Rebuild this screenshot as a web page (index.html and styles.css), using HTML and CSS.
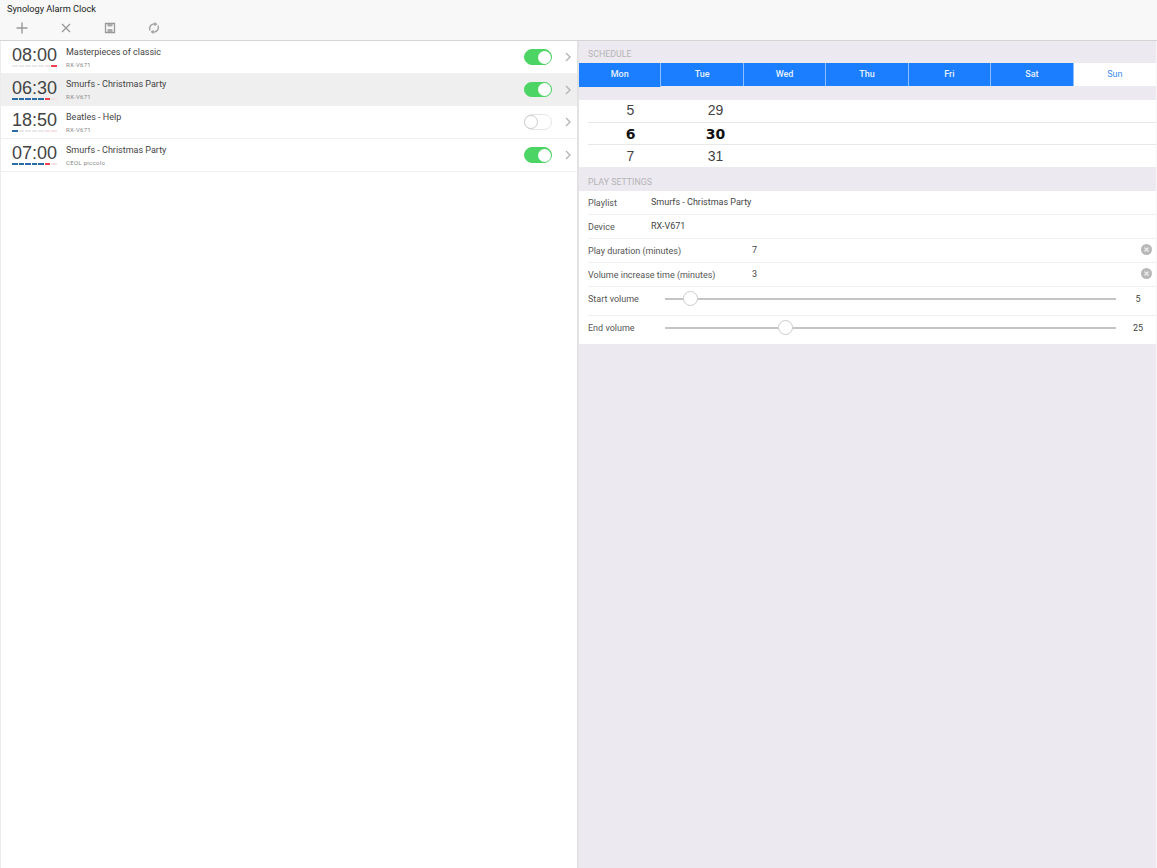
FILE: index.html
```html
<!DOCTYPE html>
<html>
<head>
<meta charset="UTF-8">
<title>Synology Alarm Clock</title>
	<link rel="stylesheet" href="styles.css">
</head>
<body>
	<div class="topbar">
		<div class="apptitle">Synology Alarm Clock</div>
		<div class="tools">
			<svg class="tool" width="14" height="14" viewBox="0 0 14 14"><path d="M7 1.500v11M1.500 7h11" stroke="#999" stroke-width="1.400" fill="none"/></svg>
			<svg class="tool" width="14" height="14" viewBox="0 0 14 14"><path d="M3 3l8 8M11 3l-8 8" stroke="#999" stroke-width="1.300" fill="none"/></svg>
			<svg class="tool" width="14" height="14" viewBox="0 0 14 14"><path d="M2.500 2.500h9v9h-9z" stroke="#999" stroke-width="1.300" fill="none"/><path d="M4.500 3h5v2.500h-5zM4.500 8h5v3h-5z" fill="#aaa"/></svg>
			<svg class="tool" width="14" height="14" viewBox="0 0 14 14"><path d="M3 9.500a4.500 4.500 0 0 1 5-6.300M11 4.500a4.500 4.500 0 0 1-5 6.300" stroke="#a5a5a5" stroke-width="1.500" fill="none"/><path d="M7.500 0.800l3 2.400-3 2zM6.500 13.200l-3-2.400 3-2z" fill="#a5a5a5"/></svg>
		</div>
	</div>
	<div class="main">
		<div class="left">
			<div class="alarm">
				<div class="timebox">
					<div class="time">08:00</div>
					<div class="days"><i></i><i></i><i></i><i></i><i></i><i></i><i class="red"></i></div>
				</div>
				<div class="info">
					<div class="song">Masterpieces of classic</div>
					<div class="dev">RX-V671</div>
				</div>
				<div class="switch on"><b></b></div>
				<svg class="arrow" width="6" height="10" viewBox="0 0 6 10"><path d="M1 1l4 4-4 4" stroke="#b5b5b5" stroke-width="1.400" fill="none"/></svg>
			</div>
			<div class="alarm sel">
				<div class="timebox">
					<div class="time">06:30</div>
					<div class="days"><i class="blue"></i><i class="blue"></i><i class="blue"></i><i class="blue"></i><i class="blue"></i><i class="red"></i><i></i></div>
				</div>
				<div class="info">
					<div class="song">Smurfs - Christmas Party</div>
					<div class="dev">RX-V671</div>
				</div>
				<div class="switch on"><b></b></div>
				<svg class="arrow" width="6" height="10" viewBox="0 0 6 10"><path d="M1 1l4 4-4 4" stroke="#b5b5b5" stroke-width="1.400" fill="none"/></svg>
			</div>
			<div class="alarm">
				<div class="timebox">
					<div class="time">18:50</div>
					<div class="days"><i class="blue"></i><i></i><i></i><i></i><i></i><i></i><i></i></div>
				</div>
				<div class="info">
					<div class="song">Beatles - Help</div>
					<div class="dev">RX-V671</div>
				</div>
				<div class="switch"><b></b></div>
				<svg class="arrow" width="6" height="10" viewBox="0 0 6 10"><path d="M1 1l4 4-4 4" stroke="#b5b5b5" stroke-width="1.400" fill="none"/></svg>
			</div>
			<div class="alarm">
				<div class="timebox">
					<div class="time">07:00</div>
					<div class="days"><i class="blue"></i><i class="blue"></i><i class="blue"></i><i class="blue"></i><i class="blue"></i><i class="red"></i><i></i></div>
				</div>
				<div class="info">
					<div class="song">Smurfs - Christmas Party</div>
					<div class="dev">CEOL piccolo</div>
				</div>
				<div class="switch on"><b></b></div>
				<svg class="arrow" width="6" height="10" viewBox="0 0 6 10"><path d="M1 1l4 4-4 4" stroke="#b5b5b5" stroke-width="1.400" fill="none"/></svg>
			</div>
		</div>
		<div class="right">
			<div class="sect first">SCHEDULE</div>
			<div class="tabs">
				<div class="tab act mon">Mon</div>
				<div class="tab act">Tue</div>
				<div class="tab act">Wed</div>
				<div class="tab act">Thu</div>
				<div class="tab act">Fri</div>
				<div class="tab act">Sat</div>
				<div class="tab">Sun</div>
			</div>
			<div class="picker">
				<div class="prow"><span>5</span><span>29</span></div>
				<div class="prow cur"><span>6</span><span>30</span></div>
				<div class="prow low"><span>7</span><span>31</span></div>
			</div>
			<div class="sect">PLAY SETTINGS</div>
			<div class="panel">
				<div class="row"><span class="lab">Playlist</span><span class="val">Smurfs - Christmas Party</span></div>
				<div class="row"><span class="lab">Device</span><span class="val">RX-V671</span></div>
				<div class="row"><span class="lab wide">Play duration (minutes)</span><span class="num">7</span>
					<svg class="clear" width="11" height="11" viewBox="0 0 11 11"><circle cx="5.500" cy="5.500" r="5.500" fill="#b8b8b8"/><path d="M3.500 3.500l4 4M7.500 3.500l-4 4" stroke="#ececec" stroke-width="1.400"/></svg>
				</div>
				<div class="row"><span class="lab wide">Volume increase time (minutes)</span><span class="num">3</span>
					<svg class="clear" width="11" height="11" viewBox="0 0 11 11"><circle cx="5.500" cy="5.500" r="5.500" fill="#b8b8b8"/><path d="M3.500 3.500l4 4M7.500 3.500l-4 4" stroke="#ececec" stroke-width="1.400"/></svg>
				</div>
				<div class="row tall">
					<span class="lab short">Start volume</span>
					<div class="slider"><b style="left:18px"></b></div>
					<span class="vol">5</span>
				</div>
				<div class="row tall">
					<span class="lab short">End volume</span>
					<div class="slider"><b style="left:113px"></b></div>
					<span class="vol">25</span>
				</div>
			</div>
		</div>
	</div>
</body>
</html>
```

FILE: styles.css
```css
html,body{
	margin: 0;
	height: 100%;
}
body{
	font-family: Roboto, "Liberation Sans", sans-serif;
	font-size: 9px;
	color: #333;
	background-color: #fff;
	display: flex;
	flex-direction: column;
	overflow: hidden;
}
.topbar{
	height: 40px;
	background-color: #f7f8f7;
	border-bottom: 1px solid #d4d4d4;
	flex: none;
}
.apptitle{
	padding: 3px 0 0 7px;
	height: 13px;
	line-height: 12px;
	color: #222;
	font-size: 9.200px;
}
.tools{
	display: flex;
	padding: 5px 0 0 15px;
	gap: 30px;
}
.tool{
	display: block;
}
.main{
	flex: 1;
	display: flex;
	min-height: 0;
}
.left{
	width: 576px;
	border-left: 1px solid #ececec;
	border-right: 2px solid #e2e2e2;
	flex: none;
}
.alarm{
	display: flex;
	align-items: center;
	height: 31.700px;
	border-bottom: 1px solid #f0f0f0;
	padding-left: 11px;
}
.alarm.sel{
	background-color: #efefef;
}
.timebox{
	width: 54px;
	flex: none;
	align-self: flex-start;
}
.time{
	font-family: "Liberation Sans", sans-serif;
	font-size: 18px;
	line-height: 20px;
	color: #444;
	margin-top: 4px;
}
.days{
	display: flex;
	gap: 1px;
	width: 46px;
}
.days i{
	width: 5.500px;
	height: 2px;
	flex: none;
	background-color: #e9e9e9;
}
.days i:nth-child(n+6){
	background-color: #f7e2e3;
}
.days i.blue{
	background-color: #2a6ca8;
}
.days i.red{
	background-color: #f0434f;
}
.info{
	flex: 1;
	align-self: flex-start;
	padding-top: 4.500px;
}
.song{
	line-height: 12px;
	color: #444;
}
.dev{
	font-size: 6px;
	line-height: 8px;
	margin-top: 3px;
	color: #888;
	letter-spacing: .3px;
}
.switch{
	width: 26px;
	height: 13.500px;
	border-radius: 8px;
	border: 1px solid #e6e6e6;
	background-color: #fff;
	position: relative;
	margin-right: 13px;
}
.switch b{
	position: absolute;
	left: -1px;
	top: 0;
	width: 12px;
	height: 12px;
	border-radius: 50%;
	background-color: #fff;
	border: 1px solid #ccc;
}
.switch.on{
	background-color: #4cd464;
	border-color: #4cd464;
}
.switch.on b{
	left: 13px;
	top: 0.500px;
	width: 13px;
	height: 13px;
	border: 0;
}
.arrow{
	margin-right: 6px;
}
.right{
	flex: 1;
	min-width: 0;
	background-color: #ece9f0;
	border-right: 1px solid #f6f6f6;
}
.sect{
	height: 23.500px;
	line-height: 30px;
	padding-left: 9px;
	font-size: 8.800px;
	color: #b5b5b5;
}
.sect.first{
	height: 22px;
	line-height: 27px;
}
.tabs{
	display: grid;
	grid-template-columns: repeat(7,1fr);
	height: 23px;
}
.tab{
	box-sizing: border-box;
	height: 23px;
	text-align: center;
	line-height: 23px;
	color: #3b8cf5;
	background-color: #fff;
}
.tab.act{
	background-color: #1a7eff;
	color: #e8f2ff;
	border-right: 1px solid #8fbfff;
	font-weight: 500;
}
.tab.mon{
	height: 24px;
}
.picker{
	margin-top: 14px;
	background-color: #fff;
	font-family: "Liberation Sans", sans-serif;
	font-size: 14px;
	color: #444;
}
.prow{
	height: 21.500px;
	line-height: 21.500px;
	margin-left: 9px;
	border-bottom: 1px solid #e8e8e8;
	display: flex;
}
.prow.cur{
	font-family: "DejaVu Sans", sans-serif;
	font-weight: bold;
	color: #111;
	line-height: 23.500px;
}
.prow.low{
	border-bottom: 0;
	height: 22px;
	line-height: 22px;
}
.prow span{
	width: 85px;
	text-align: center;
}
.panel{
	background-color: #fff;
}
.row{
	height: 23px;
	border-bottom: 1px solid #f0f0f0;
	margin-left: 9px;
	display: flex;
	align-items: center;
	position: relative;
}
.row.tall{
	height: 28px;
}
.row:last-child{
	border-bottom: 0;
}
.lab{
	width: 63px;
	flex: none;
	color: #555;
	margin-top: 1px;
}
.lab.wide{
	width: 164px;
}
.lab.short{
	width: 77px;
	margin-top: -4px;
}
.val{
	color: #444;
}
.num{
	flex: 1;
	color: #444;
}
.clear{
	display: block;
	margin-right: 4px;
	margin-top: -2px;
}
.slider{
	width: 451px;
	flex: none;
	height: 2px;
	background-color: #c4c4c4;
	position: relative;
	margin-top: -4px;
}
.slider b{
	position: absolute;
	top: -7px;
	width: 15px;
	height: 15px;
	border-radius: 50%;
	background-color: #fff;
	border: 1px solid #ccc;
	box-sizing: border-box;
}
.vol{
	flex: 1;
	padding-left: 4px;
	text-align: center;
	color: #444;
	margin-top: -4px;
}
```
